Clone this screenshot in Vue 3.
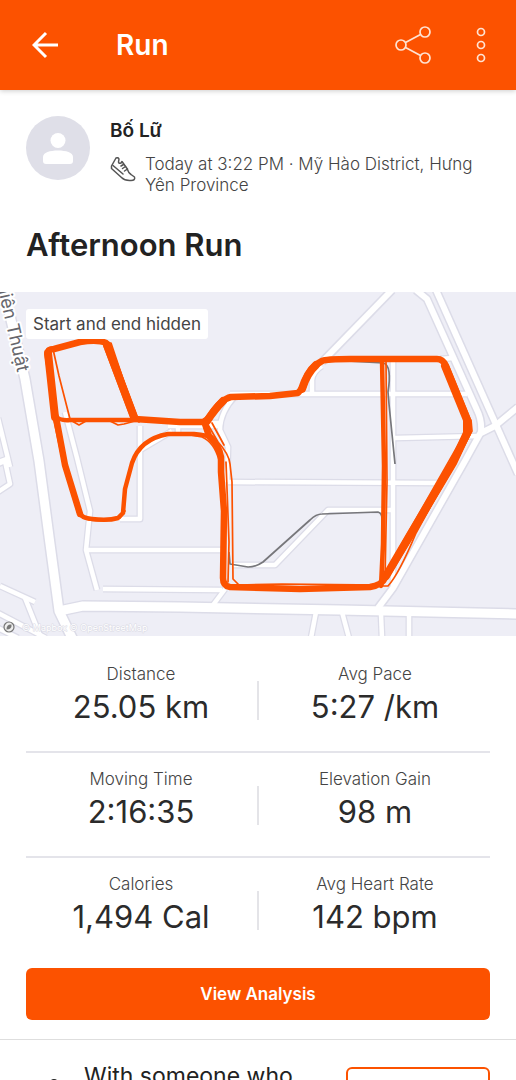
<script setup>
import { ref } from 'vue'

const activity = ref({
  athlete: 'Bố Lữ',
  when: 'Today at 3:22 PM · Mỹ Hào District, Hưng Yên Province',
  title: 'Afternoon Run'
})

const statRows = [
  [
    { label: 'Distance', value: '25.05 km' },
    { label: 'Avg Pace', value: '5:27 /km' }
  ],
  [
    { label: 'Moving Time', value: '2:16:35' },
    { label: 'Elevation Gain', value: '98 m' }
  ],
  [
    { label: 'Calories', value: '1,494 Cal' },
    { label: 'Avg Heart Rate', value: '142 bpm' }
  ]
]

// Streets, drawn twice: casing first, then the white fill
const minorRoads = [
  'M65 120 L77 166 L90 219 L86 258 L97 298',
  'M85 258 H222',
  'M103 297 L222 298',
  'M140 134 V227 H120',
  'M140 158 L172 139',
  'M168 134 H222',
  'M178 134 V143',
  'M205 131 H222',
  'M236 103 Q220 120 220 138 L228 155 L227 190',
  'M230 102 H467',
  'M312 102 V88 Q313 79 322 74',
  'M393 69 V297',
  'M395 146 L480 144',
  'M440 67 L453 66',
  'M228 190 L440 191',
  'M232 273 H275 L328 218 H392',
  'M225 297 L213 313',
  'M316 320 L311 346',
  'M342 320 L349 346',
  'M381 322 L382 346',
  'M409 322 V346',
  'M0 294 L35 310',
  'M25 306 L41 346',
  'M-2 321 L46 346',
  'M-2 336 L18 346',
  'M-2 172 L5 169 L10 192 L-2 200',
  'M-2 126 L10 175',
  'M-2 170 L7 167'
]

const midRoads = [
  'M322 70 L392 -2',
  'M416 -2 L427 7 L477 118 Q482 128 481 140 L465 169 L393 296 L378 316',
  'M436 -2 L518 182',
  'M481 141 L495 134 L518 115'
]

const mainRoads = [
  'M2 -10 L25 87 L39 169 L50 252 L59 319 L74 350',
  'M59 319 L83 314 L180 315 L340 318 L518 322'
]

const ghostTracks = [
  'M347 69 L383 71 Q388 72 389 80 Q390 88 388 100 L389 112 L395 172',
  'M229 260 L230 272 L248 275 Q256 275 263 270 L310 228 Q316 222 322 222 L378 220 Q382 221 382 227 L383 279 L387 284'
]

// Laps overlap here, so the line is at its thickest
const heavyTracks = [
  'M48 61 L55 125',
  'M107 53 L134 125',
  'M207 129 Q215 117 223 109',
  'M302 97 Q307 81 316 73',
  'M445 74 L467 128 V141 L453 171 L410 243 L386 284'
]

const wideTracks = [
  'M48 61 Q48 57 54 57 L80 50 Q98 47 106 51 L112 64 L135 127 L180 130 H203 Q207 129 210 124 Q221 107 231 105 L270 104 L298 101 L303 95 Q308 76 322 69 Q326 67 350 67 H437 Q443 67 446 74 L468 128 V141 L453 171 L410 245 L385 286 Q382 293 370 295 L300 297 L230 295 Q223 294 223 286 L224 219 L221 180 V165 Q219 153 209 144 L205 132',
  'M56 125 L65 173 L80 222'
]

const midTracks = [
  'M48 61 L55 127 L65 173 L79 220 Q81 226 92 227 Q108 229 118 226 L123 221 L125 197 L132 171 Q140 147 168 142 H194 Q208 143 211 146',
  'M55 124 Q60 129 70 128 L135 128',
  'M382 67 L384 174 L383 252 L381 294'
]

const thinTracks = [
  'M53 57 L59 84 L70 127',
  'M45 62 L57 138 L70 191 L83 225',
  'M47 57 L80 49 L111 51 L124 90 L139 130',
  'M104 54 L132 128',
  'M60 127 L72 129 L79 133 L86 129 H110 L118 133 L124 132 L139 128',
  'M80 224 Q86 229 104 229 L120 226 L125 219',
  'M207 131 L218 150 Q229 162 230 172 L232 190 L233 287 L239 293 L282 292 L383 293',
  'M178 141 L202 145 Q214 150 219 168',
  'M212 131 L224 153',
  'M226 170 L229 250 L228 290',
  'M386 69 L387 190 L385 286',
  'M471 128 L472 139 L416 241 Q399 282 388 294 H374',
  'M465 141 L400 255 L378 294'
]
</script>

<template>
  <div class="screen">
    <header class="app-bar">
      <button class="icon-btn" aria-label="Back">
        <svg width="28" height="28" viewBox="0 0 28 28" fill="none" stroke="#fff" stroke-width="3">
          <path d="M26 14 H3 M14 2 L2 14 L14 26" />
        </svg>
      </button>
      <h1>Run</h1>
      <button class="icon-btn share" aria-label="Share">
        <svg width="38" height="38" viewBox="0 0 38 38" fill="none" stroke="#ffe3d2" stroke-width="1.7">
          <circle cx="7" cy="19" r="5" />
          <circle cx="31" cy="6" r="5" />
          <circle cx="31" cy="32" r="5" />
          <path d="M11.5 16.6 L26.5 8.4 M11.5 21.4 L26.5 29.6" />
        </svg>
      </button>
      <button class="icon-btn" aria-label="More options">
        <svg width="10" height="36" viewBox="0 0 10 36" fill="none" stroke="#ffe3d2" stroke-width="1.7">
          <circle cx="5" cy="5" r="3.5" />
          <circle cx="5" cy="18" r="3.5" />
          <circle cx="5" cy="31" r="3.5" />
        </svg>
      </button>
    </header>

    <main>
      <section class="summary">
        <svg class="avatar" viewBox="0 0 64 64">
          <circle cx="32" cy="32" r="32" fill="#dfdfe8" />
          <circle cx="32" cy="24.5" r="7.5" fill="#fff" />
          <path d="M17 45 V41 C17 36.5 24 34.5 32 34.5 S47 36.5 47 41 V45 Q47 48 44 48 H20 Q17 48 17 45 Z" fill="#fff" />
        </svg>
        <div class="who">
          <p class="athlete">{{ activity.athlete }}</p>
          <div class="meta">
            <svg class="shoe" viewBox="0 0 26 26" fill="none" stroke="#555" stroke-width="1.5" stroke-linejoin="round" stroke-linecap="round">
              <path d="M1.5 10 L6 2 Q8 1 9 3 L8.5 6 Q9 8 11 7 L12 5.5 L17 12.5 Q18.5 17 21 18.5 L24.5 21 Q25.5 24.5 21 24.5 Q15 25 11.5 21.5 L1.5 12.5 Z" />
              <path d="M3 9.5 L13 18 M11 10 L13.5 8.5 M12.5 12.5 L15.5 10.5 M14.5 15 L17.5 13" />
            </svg>
            <p>{{ activity.when }}</p>
          </div>
        </div>
      </section>

      <h2>{{ activity.title }}</h2>

      <section class="map">
        <svg viewBox="0 0 516 344" preserveAspectRatio="xMidYMid slice" fill="none" stroke-linejoin="round">
          <rect width="516" height="344" fill="#eeeef6" />
          <g stroke="#dcdce8">
            <path v-for="d in minorRoads" :key="d" :d="d" stroke-width="7" />
            <path v-for="d in midRoads" :key="d" :d="d" stroke-width="9" />
            <path v-for="d in mainRoads" :key="d" :d="d" stroke-width="12" />
          </g>
          <g stroke="#fff">
            <path v-for="d in minorRoads" :key="d" :d="d" stroke-width="4.5" />
            <path v-for="d in midRoads" :key="d" :d="d" stroke-width="6" />
            <path v-for="d in mainRoads" :key="d" :d="d" stroke-width="9" />
          </g>
          <text class="street" transform="translate(-3 -7) rotate(77)">hiện Thuật</text>
          <g stroke="#77777b" stroke-width="1.7">
            <path v-for="d in ghostTracks" :key="d" :d="d" />
          </g>
          <g stroke="#fc5200" stroke-linecap="round">
            <path v-for="d in heavyTracks" :key="d" :d="d" stroke-width="8" />
            <path v-for="d in wideTracks" :key="d" :d="d" stroke-width="6.5" />
            <path v-for="d in midTracks" :key="d" :d="d" stroke-width="4.5" />
            <path v-for="d in thinTracks" :key="d" :d="d" stroke-width="1.7" />
          </g>
          <circle cx="9" cy="335" r="5" stroke="#777" stroke-width="1.2" fill="#eee" />
          <path d="M6.5 337.5 Q6.5 332 11.5 332.5 Q12 337.5 6.5 337.5 Z" fill="#777" />
          <text class="credit" x="22" y="339">© Mapbox © OpenStreetMap</text>
        </svg>
        <span class="map-note">Start and end hidden</span>
      </section>

      <section class="stats">
        <div v-for="(row, i) in statRows" :key="i" class="stat-row">
          <div v-for="stat in row" :key="stat.label" class="stat">
            <span class="stat-label">{{ stat.label }}</span>
            <span class="stat-value">{{ stat.value }}</span>
          </div>
        </div>
      </section>

      <div class="actions">
        <button class="primary-btn">View Analysis</button>
      </div>

      <section class="prompt">
        <svg class="prompt-icon" viewBox="0 0 32 32" fill="#222">
          <circle cx="16" cy="16" r="5" />
          <path d="M7 32 Q8 23 16 23 T25 32 Z" />
        </svg>
        <p>With someone who</p>
        <button class="outline-btn" aria-label="Add others"></button>
      </section>
    </main>
  </div>
</template>

<style>
body {
  margin: 0;
  background: #fff;
}
</style>

<style scoped>
.screen {
  display: flex;
  flex-direction: column;
  height: 100vh;
  overflow: hidden;
  font-family: Inter, Roboto, sans-serif;
  color: #222;
}

h1,
h2,
p {
  margin: 0;
}

button {
  font-family: inherit;
  cursor: pointer;
}

.app-bar {
  display: flex;
  align-items: center;
  flex-shrink: 0;
  height: 90px;
  box-sizing: border-box;
  padding: 0 30px 0 32px;
  background: #fc5200;
  color: #fff;
  box-shadow: 0 1px 5px rgba(0, 0, 0, 0.2);
  z-index: 1;
}

.app-bar h1 {
  flex: 1;
  margin-left: 56px;
  font-size: 28px;
  font-weight: 600;
}

.icon-btn {
  display: flex;
  padding: 0;
  border: none;
  background: none;
}

.share {
  margin-right: 44px;
}

main {
  flex: 1;
  min-height: 0;
  overflow-y: auto;
  scrollbar-width: none;
}

.summary {
  display: flex;
  gap: 20px;
  padding: 26px 26px 0;
}

.avatar {
  flex-shrink: 0;
  width: 64px;
  height: 64px;
}

.athlete {
  margin-top: 4px;
  font-size: 19px;
  line-height: 22px;
  font-weight: 600;
}

.meta {
  display: flex;
  gap: 9px;
  margin-top: 12px;
  font-size: 17px;
  line-height: 21px;
  font-weight: 300;
  color: #444;
}

.shoe {
  flex-shrink: 0;
  width: 26px;
  height: 26px;
  margin-top: 2px;
}

h2 {
  padding: 31px 26px 29px;
  font-size: 31px;
  line-height: 36px;
  font-weight: 600;
}

.map {
  position: relative;
}

.map svg {
  display: block;
  width: 100%;
}

.map-note {
  position: absolute;
  top: 17px;
  left: 26px;
  padding: 4px 7px;
  border-radius: 3px;
  background: #fff;
  color: #444;
  font-size: 17px;
  line-height: 22px;
}

.street {
  fill: #66666c;
  stroke: #fff;
  stroke-width: 4px;
  paint-order: stroke;
  font-size: 18px;
}

.credit {
  fill: #fff;
  stroke: #dadae4;
  stroke-width: 1px;
  paint-order: stroke;
  font-size: 9px;
}

.stats {
  padding: 12px 26px 0;
}

.stat-row {
  display: grid;
  grid-template-columns: 1fr 1fr;
  gap: 4px;
  padding: 15px 0 25px;
}

.stat-row + .stat-row {
  border-top: 2px solid #e4e4ea;
}

.stat {
  display: flex;
  flex-direction: column;
  align-items: center;
  gap: 3px;
  position: relative;
}

.stat + .stat::before {
  content: '';
  position: absolute;
  top: 18px;
  left: -3px;
  width: 2px;
  height: 39px;
  background: #e4e4e8;
}

.stat-label {
  font-size: 17px;
  line-height: 22px;
  font-weight: 300;
  color: #444;
}

.stat-value {
  font-size: 31px;
  line-height: 38px;
  color: #2b2b2b;
}

.actions {
  padding: 7px 26px 19px;
}

.primary-btn {
  width: 100%;
  height: 52px;
  border: none;
  border-radius: 6px;
  background: #fc5200;
  color: #fff;
  font-size: 17px;
  font-weight: 600;
}

.prompt {
  display: flex;
  align-items: flex-start;
  gap: 14px;
  padding: 21px 26px;
  border-top: 1px solid #dedede;
}

.prompt p {
  flex: 1;
  font-size: 23px;
  line-height: 30px;
}

.prompt-icon {
  width: 32px;
  height: 32px;
  margin-left: 12px;
  margin-top: 7px;
}

.outline-btn {
  width: 144px;
  height: 52px;
  margin-top: 6px;
  border: 2px solid #fc5200;
  border-radius: 6px;
  background: #fff;
}
</style>
